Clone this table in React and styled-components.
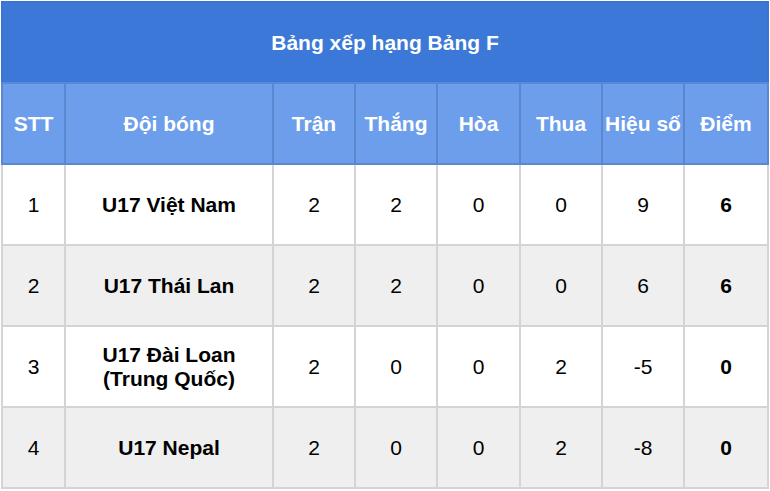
import React from "react";
import styled, { createGlobalStyle } from "styled-components";

const GlobalStyle = createGlobalStyle`
  html, body {
    margin: 0;
    padding: 0;
    background: #ffffff;
  }
  body {
    font-family: "Liberation Sans", Arial, sans-serif;
  }
`;

const Wrap = styled.div`
  padding: 1px;
`;

const Table = styled.table`
  border-collapse: collapse;
  width: 766px;
  table-layout: fixed;
  font-family: "Liberation Sans", Arial, sans-serif;
`;

const TitleCell = styled.th`
  height: 79px;
  background: #3c78d8;
  color: #ffffff;
  font-size: 21px;
  font-weight: bold;
  text-align: center;
  border: 2px solid #3a74d0;
  border-bottom: 2px solid #5a88d4;
  padding: 0;
`;

const HeadCell = styled.th`
  height: 79px;
  background: #6d9eeb;
  color: #ffffff;
  font-size: 21px;
  font-weight: bold;
  text-align: center;
  white-space: nowrap;
  border: 2px solid #5b87cf;
  padding: 0;
`;

const Row = styled.tr`
  background: ${(p) => (p.$alt ? "#efefef" : "#ffffff")};
`;

const Cell = styled.td`
  height: 79px;
  color: #000000;
  font-size: 21px;
  font-weight: ${(p) => (p.$bold ? "bold" : "normal")};
  line-height: 24px;
  text-align: center;
  border: 2px solid #d4d4d4;
  padding: 0 2px;
`;

const widths = [63, 208, 82, 82, 83, 82, 82, 84];
const headers = ["STT", "Đội bóng", "Trận", "Thắng", "Hòa", "Thua", "Hiệu số", "Điểm"];

const rows = [
  { stt: 1, team: ["U17 Việt Nam"], played: 2, win: 2, draw: 0, lose: 0, diff: 9, pts: 6 },
  { stt: 2, team: ["U17 Thái Lan"], played: 2, win: 2, draw: 0, lose: 0, diff: 6, pts: 6 },
  { stt: 3, team: ["U17 Đài Loan", "(Trung Quốc)"], played: 2, win: 0, draw: 0, lose: 2, diff: -5, pts: 0 },
  { stt: 4, team: ["U17 Nepal"], played: 2, win: 0, draw: 0, lose: 2, diff: -8, pts: 0 },
];

const App = () => {
  return (
    <Wrap>
      <GlobalStyle />
      <Table>
        <colgroup>
          {widths.map((w, i) => (
            <col key={i} style={{ width: w }} />
          ))}
        </colgroup>
        <thead>
          <tr>
            <TitleCell colSpan={8}>Bảng xếp hạng Bảng F</TitleCell>
          </tr>
          <tr>
            {headers.map((h) => (
              <HeadCell key={h}>{h}</HeadCell>
            ))}
          </tr>
        </thead>
        <tbody>
          {rows.map((r, i) => (
            <Row key={r.stt} $alt={i % 2 === 1}>
              <Cell>{r.stt}</Cell>
              <Cell $bold>
                {r.team.map((t, j) => (
                  <div key={j}>{t}</div>
                ))}
              </Cell>
              <Cell>{r.played}</Cell>
              <Cell>{r.win}</Cell>
              <Cell>{r.draw}</Cell>
              <Cell>{r.lose}</Cell>
              <Cell>{r.diff}</Cell>
              <Cell $bold>{r.pts}</Cell>
            </Row>
          ))}
        </tbody>
      </Table>
    </Wrap>
  );
};

export default App;
